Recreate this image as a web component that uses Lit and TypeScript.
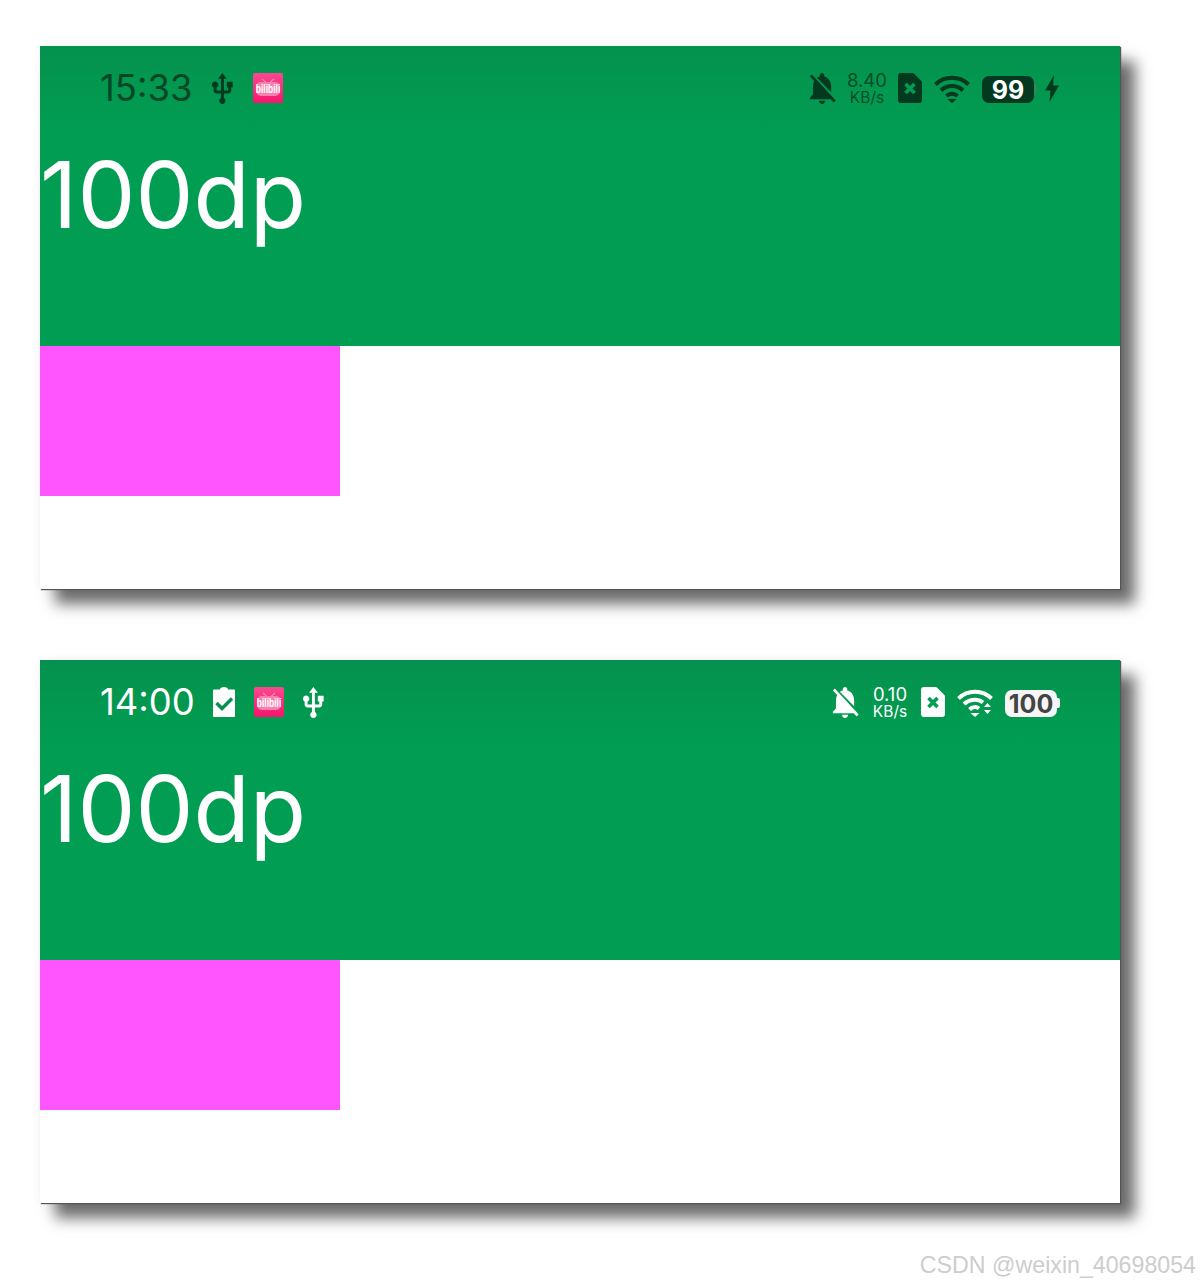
import { LitElement, html, css, svg } from "lit";
import { customElement, property } from "lit/decorators.js";

const usb = html`<svg class="usb" viewBox="4.8 1 15.2 21.2"><path fill="currentColor" d="M15 7v4h1v2h-3V5h2l-3-4-3 4h2v8H8v-2.07c.7-.37 1.2-1.08 1.2-1.93 0-1.21-.99-2.2-2.2-2.2-1.21 0-2.2.99-2.2 2.2 0 .85.5 1.56 1.2 1.93V13c0 1.11.89 2 2 2h3v3.05c-.71.37-1.2 1.1-1.2 1.95 0 1.22.99 2.2 2.2 2.2 1.21 0 2.2-.98 2.2-2.2 0-.85-.49-1.58-1.2-1.95V15h3c1.11 0 2-.89 2-2v-2h1V7h-4z"/></svg>`;

const bili = html`<svg class="bili" viewBox="0 0 30 30">
  <defs><linearGradient id="bg" x1="0" y1="0" x2="0" y2="1"><stop offset="0" stop-color="#f9498f"/><stop offset="1" stop-color="#f5166e"/></linearGradient></defs>
  <rect width="30" height="30" rx="1.5" fill="url(#bg)"/>
  <path d="M9 6l3.500 3M21 6l-3.500 3" stroke="#fb8ab5" stroke-width="1.300" fill="none"/>
  <rect x="3" y="9" width="24" height="14" rx="5" fill="#fb7fae"/>
  <text transform="translate(15 19.500) scale(.9 1.350)" text-anchor="middle" fill="#fff" font-family="Liberation Sans" font-weight="700" font-size="9.500">bilibili</text>
</svg>`;

const bell = html`<svg class="bell" viewBox="3.4 2.5 17.8 19.5" preserveAspectRatio="none"><path fill="currentColor" d="M20 18.69L7.84 6.14 5.27 3.49 4 4.76l2.8 2.8v.01c-.52.99-.8 2.16-.8 3.42v5l-2 2v1h13.73l2 2L21 19.72l-1-1.03zM12 22c1.11 0 2-.89 2-2h-4c0 1.11.89 2 2 2zm6-7.32V11c0-3.08-1.64-5.64-4.5-6.32V4c0-.83-.67-1.5-1.5-1.5s-1.5.67-1.5 1.5v.68c-.15.03-.29.08-.42.12-.1.03-.2.07-.3.11h-.01c-.2.08-.4.17-.59.27-.2.1-.4.2-.59.32L18 14.68z"/></svg>`;

const sim = (mark: string) => html`<svg class="sim" viewBox="0 0 24 30">
  <path fill="currentColor" d="M3 0h11.500a2 2 0 0 1 1.400.6l7.500 7.500a2 2 0 0 1 .6 1.400V27a3 3 0 0 1-3 3H3a3 3 0 0 1-3-3V3a3 3 0 0 1 3-3z"/>
  <path d="M7.500 11l9 9M16.500 11l-9 9" stroke=${mark} stroke-width="3.600" fill="none"/>
</svg>`;

const wifi = (arrows: boolean) => html`<svg class="wifi" viewBox="0 0 36 29">
  <g fill="none" stroke="currentColor" stroke-width="4">
    <path d="M1.500 10.500C10.500 1.500 25.500 1.500 34.500 10.500"/>
    ${arrows
      ? svg`<path d="M7 16C13 10.500 21 10.500 26 14.500"/><path d="M12.500 21.500C15.500 18.500 19.500 18.500 22 20.500"/>`
      : svg`<path d="M7 16.500C13 10.500 23 10.500 29 16.500"/><path d="M12.500 22C15.500 19 20.500 19 23.500 22"/>`}
  </g>
  <path fill="currentColor" d="M13.500 25h9l-4.500 4z"/>
  ${arrows ? svg`<path fill="currentColor" d="M27 19l3.500-4 3.500 4zM27 22h7l-3.500 4z"/>` : ""}
</svg>`;

const bolt = html`<svg class="bolt" viewBox="0 0 14 27"><path fill="currentColor" d="M9 0L0 15.500h5.500L4.500 27 14 10.500H8z"/></svg>`;

const clip = html`<svg class="clip" viewBox="0 0 22 30">
  <path fill="currentColor" d="M7 2.500C7 1 8.500 0 11 0s4 1 4 2.500h6a1 1 0 0 1 1 1V29a1 1 0 0 1-1 1H1a1 1 0 0 1-1-1V3.500a1 1 0 0 1 1-1z"/>
  <path d="M3.500 16l5.500 5.500 10-10" stroke="#04914f" stroke-width="3.400" fill="none"/>
</svg>`;

@customElement("status-bar")
class StatusBar extends LitElement {
  @property() time = "";
  @property() speed = "";
  @property() level = "";
  @property({ type: Boolean }) charging = false;

  static styles = css`
    :host { display: block; }
    .bar {
      height: 84px;
      padding: 0 60px;
      display: flex;
      align-items: center;
      justify-content: space-between;
      font-family: Inter, "Liberation Sans", sans-serif;
      color: #fff;
    }
    .bar.dark { color: #03391f; }
    .side { display: flex; align-items: center; }
    .left { gap: 18.500px; }
    .right { gap: 12px; }
    .dark .right { padding-right: 1px; }
    .time { font-size: 36.400px; line-height: 40px; white-space: nowrap; }
    .dark .time { opacity: .85; }
    svg { display: block; flex: none; }
    .usb { width: 24px; height: 31px; }
    .bili { width: 30px; height: 30px; }
    .bell { width: 27px; height: 31px; }
    .sim { width: 24px; height: 30px; }
    .wifi { width: 36px; height: 29px; }
    .bolt { width: 14px; height: 27px; margin-left: -4px; margin-top: 1px; }
    .clip { width: 22px; height: 30px; }
    .speed { display: flex; flex-direction: column; align-items: center; width: 38px; white-space: nowrap; }
    .speed b { font-weight: 400; font-size: 18.500px; line-height: 18px; }
    .speed i { font-style: normal; font-size: 15.500px; line-height: 15px; margin-top: 1px; }
    .dark .speed { opacity: .8; }
    .batt { display: flex; align-items: center; margin-top: 2px; }
    .level {
      width: 52px;
      height: 27px;
      border-radius: 7px;
      background: #03391f;
      color: #fff;
      font-size: 25px;
      font-weight: 700;
      line-height: 28px;
      text-align: center;
    }
    .tip { width: 3px; height: 10px; border-radius: 0 2px 2px 0; background: #2a8a5a; }
    .bar:not(.dark) .level { background: #f6f6f6; color: #444; }
    .bar:not(.dark) .tip { background: #f6f6f6; }
  `;

  render() {
    const dark = this.charging;
    return html`<div class="bar ${dark ? "dark" : ""}">
      <div class="side left">
        <span class="time">${this.time}</span>
        ${dark ? html`${usb}${bili}` : html`${clip}${bili}${usb}`}
      </div>
      <div class="side right">
        ${bell}
        <div class="speed"><b>${this.speed}</b><i>KB/s</i></div>
        ${sim("#019d53")}
        ${wifi(!dark)}
        <div class="batt"><div class="level">${this.level}</div><div class="tip"></div></div>
        ${dark ? bolt : ""}
      </div>
    </div>`;
  }
}

@customElement("app-root")
class AppRoot extends LitElement {
  static styles = css`
    :host { display: block; width: 1200px; height: 1284px; background: #fff; overflow: hidden; }
    .page { padding: 46px 80px 0 40px; display: flex; flex-direction: column; gap: 71px; }
    .card {
      height: 543px;
      background: #fff;
      box-shadow: 1px 1px 1px #555, 15px 15px 14px rgba(0, 0, 0, .58), 0 0 8px rgba(120, 90, 120, .07);
    }
    .head {
      height: 300px;
      background: linear-gradient(#05904f 0, #03964f 30px, #019d53 90px);
    }
    .big {
      font-family: Inter, "Liberation Sans", sans-serif;
      font-size: 92px;
      line-height: 130px;
      color: #fff;
      white-space: nowrap;
    }
    .pink { width: 300px; height: 150px; background: #ff55ff; }
    .mark {
      margin-top: 49px;
      padding-right: 4px;
      text-align: right;
      font-family: "Liberation Sans", sans-serif;
      font-size: 23.200px;
      line-height: 26px;
      color: #cdcdcd;
    }
  `;

  private screens = [
    { time: "15:33", speed: "8.40", level: "99", charging: true },
    { time: "14:00", speed: "0.10", level: "100", charging: false },
  ];

  render() {
    return html`<div class="page">
      ${this.screens.map(
        (s) => html`<section class="card">
          <div class="head">
            <status-bar .time=${s.time} .speed=${s.speed} .level=${s.level} .charging=${s.charging}></status-bar>
            <div class="big">100dp</div>
          </div>
          <div class="pink"></div>
        </section>`
      )}
    </div>
    <div class="mark">CSDN @weixin_40698054</div>`;
  }
}
